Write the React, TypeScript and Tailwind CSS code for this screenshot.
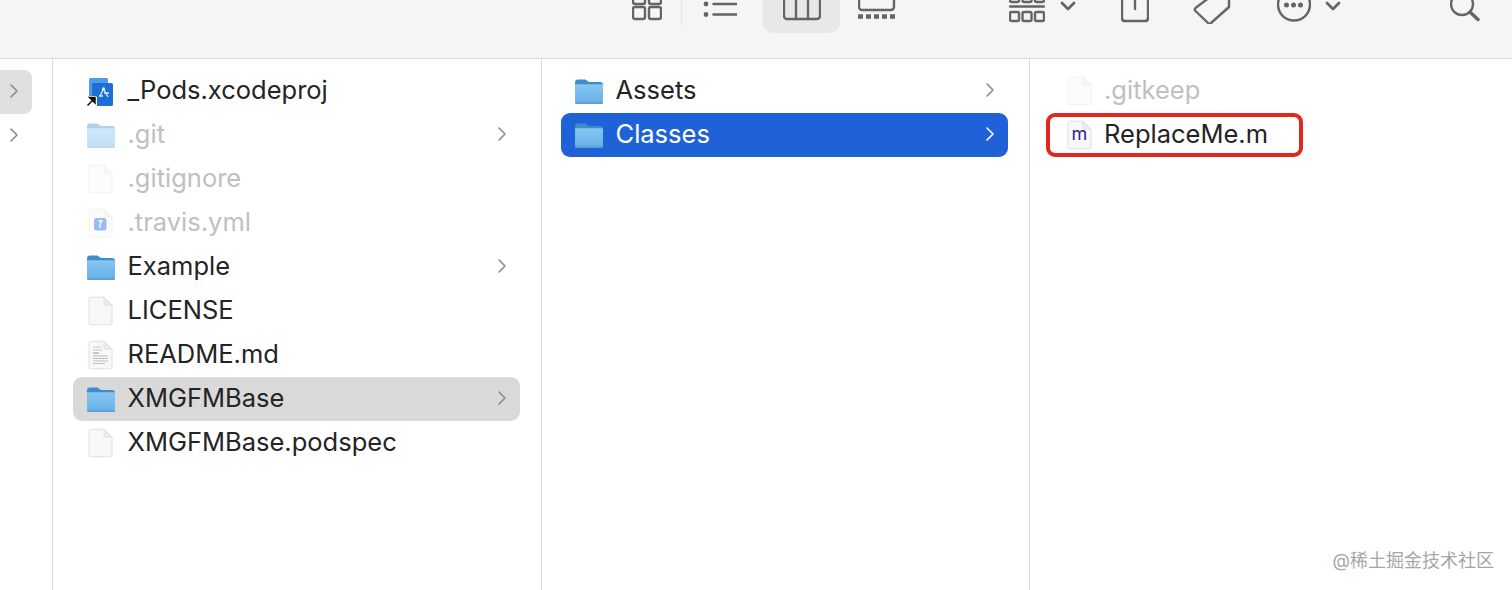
const font = { fontFamily: "Inter, 'Noto Sans CJK SC', sans-serif" };

function FolderIcon({ faded = false }: { faded?: boolean }) {
  return (
    <svg width="30" height="28" viewBox="0 0 30 28" className={faded ? "opacity-40" : ""}>
      <defs>
        <linearGradient id="folder-body" x1="0" y1="0" x2="0" y2="1">
          <stop offset="0" stopColor="#86c6f1" />
          <stop offset="1" stopColor="#66afe6" />
        </linearGradient>
      </defs>
      <path d="M1 5.500C1 3.500 2 2.500 4 2.500h6.500c1.500 0 2 .6 3 1.600.7.700 1.200.900 2.200.900H26c2 0 3 1 3 3v3H1z" fill="#3f8ccb" />
      <path d="M1 8.500c0-.800.500-1.200 1.200-1.200h25.600c.700 0 1.200.400 1.200 1.200v15.500c0 1.700-1 2.600-2.600 2.600H3.600C2 26.600 1 25.700 1 24z" fill="url(#folder-body)" />
      <rect x="1" y="25.500" width="28" height="1.500" rx="0.700" fill="#5a9ccf" />
    </svg>
  );
}

function FileIcon({ faded = false, children }: { faded?: boolean; children?: React.ReactNode }) {
  return (
    <svg width="30" height="32" viewBox="0 0 30 32" className={faded ? "opacity-40" : ""}>
      <path d="M3 3.500c0-.800.500-1.300 1.300-1.300h13.700L26 10v18.500c0 .800-.500 1.300-1.300 1.300H4.300c-.800 0-1.300-.500-1.300-1.300z" fill="#f8f8f8" stroke="#e0e0e0" />
      <path d="M18 2.200V8.500c0 1 .500 1.500 1.500 1.500H26z" fill="#ececec" stroke="#e0e0e0" />
      {children}
    </svg>
  );
}

function XcodeIcon() {
  return (
    <svg width="30" height="32" viewBox="0 0 30 32">
      <rect x="3" y="3" width="19" height="25" rx="1.500" fill="#4f9be6" />
      <rect x="6" y="8" width="21" height="23" rx="1.500" fill="#1c6fd3" />
      <path d="M14 21l3.500-7 4.500 8M13 21h4M18 18h5" fill="none" stroke="#d8e9fb" strokeWidth="1.300" />
      <circle cx="17.500" cy="14" r="1.700" fill="#d8e9fb" />
      <rect x="0" y="21" width="11" height="11" rx="1.500" fill="#ffffff" />
      <path d="M1.500 30.500l6-6M3.500 22.500h5.500v5.500z" fill="#111111" stroke="#111111" strokeWidth="1.500" />
    </svg>
  );
}

function Chevron({ tone = "#8b8b8b" }: { tone?: string }) {
  return (
    <svg width="10" height="16" viewBox="0 0 10 16" className="-mt-[2px] shrink-0">
      <path d="M2 2l6 6-6 6" fill="none" stroke={tone} strokeWidth="1.600" strokeLinecap="round" strokeLinejoin="round" />
    </svg>
  );
}

type Row = {
  name: string;
  icon: React.ReactNode;
  faded?: boolean;
  arrow?: boolean;
  state?: "active" | "inactive";
};

const readme = (
  <FileIcon>
    <path d="M7 8h8M7 11h9" stroke="#c9c9c9" strokeWidth="1" />
    <path d="M7 14h6" stroke="#e08a92" strokeWidth="1.200" />
    <path d="M7 17h15M7 19.500h15M7 22h15M7 24.500h12" stroke="#bdbdbd" strokeWidth="1" />
  </FileIcon>
);

const travis = (
  <FileIcon faded>
    <rect x="8" y="11" width="12.500" height="12.500" rx="2.500" fill="#0058e0" />
    <path d="M13.500 21l1.500-7M12.500 14h4.500" stroke="#fff" strokeWidth="1.300" />
  </FileIcon>
);

const mFile = (
  <FileIcon>
    <text x="14.500" y="21" textAnchor="middle" fontSize="18" fontFamily="Inter, sans-serif" fill="#2a2391">m</text>
  </FileIcon>
);

const projectRows: Row[] = [
  { name: "_Pods.xcodeproj", icon: <XcodeIcon /> },
  { name: ".git", icon: <FolderIcon faded />, faded: true, arrow: true },
  { name: ".gitignore", icon: <FileIcon faded />, faded: true },
  { name: ".travis.yml", icon: travis, faded: true },
  { name: "Example", icon: <FolderIcon />, arrow: true },
  { name: "LICENSE", icon: <FileIcon /> },
  { name: "README.md", icon: readme },
  { name: "XMGFMBase", icon: <FolderIcon />, arrow: true, state: "inactive" },
  { name: "XMGFMBase.podspec", icon: <FileIcon /> },
];

const baseRows: Row[] = [
  { name: "Assets", icon: <FolderIcon />, arrow: true },
  { name: "Classes", icon: <FolderIcon />, arrow: true, state: "active" },
];

function FinderRow({ row }: { row: Row }) {
  const active = row.state === "active";
  return (
    <div
      className={`flex h-[44px] items-center rounded-[9px] pl-[13px] pr-[13px] ${
        active ? "bg-[#1f62d8]" : row.state === "inactive" ? "bg-[#d9d9d9]" : ""
      }`}
    >
      <div className="flex w-[41.5px] shrink-0 items-center">{row.icon}</div>
      <span
        className={`flex-1 pb-[2px] text-[25.5px] leading-[38px] ${
          active ? "text-white" : row.faded ? "text-[#c0c0c0]" : "text-[#242424]"
        }`}
      >
        {row.name}
      </span>
      {row.arrow && <Chevron tone={active ? "#ffffff" : "#8b8b8b"} />}
    </div>
  );
}

function ToolIcon({ w, ml, children }: { w: number; ml: number; children: React.ReactNode }) {
  // y in the viewBox is the page y, the tops of the icons are cut by the window
  return (
    <svg
      width={w}
      height="40"
      viewBox={`0 -16 ${w} 40`}
      className="shrink-0"
      style={{ marginLeft: ml }}
      fill="none"
      stroke="#666466"
      strokeWidth="2.400"
      strokeLinecap="round"
      strokeLinejoin="round"
    >
      {children}
    </svg>
  );
}

function Toolbar() {
  return (
    <div className="h-[59px] shrink-0 overflow-hidden border-b border-[#dcdadb] bg-[#f6f4f5]">
      <div className="-mt-4 flex h-[60px] items-start pl-[632px]">
        <ToolIcon w={30} ml={0}>
          <rect x="1" y="-8" width="12" height="12" rx="2" />
          <rect x="17" y="-8" width="12" height="12" rx="2" />
          <rect x="1" y="7" width="12" height="12" rx="2" />
          <rect x="17" y="7" width="12" height="12" rx="2" />
        </ToolIcon>
        <div className="ml-[19px] mt-[16px] h-[26px] w-px bg-[#e6e4e5]" />
        <ToolIcon w={34} ml={21}>
          <path d="M10.500 4h23M10.500 14.500h23" />
          <circle cx="3" cy="4" r="1.200" fill="#666466" />
          <circle cx="3" cy="14.500" r="1.200" fill="#666466" />
        </ToolIcon>
        <div className="ml-[26px] flex h-[49px] w-[77px] shrink-0 justify-center rounded-b-[10px] bg-[#e9e7e8]">
          <ToolIcon w={38} ml={0}>
            <rect x="1" y="-8" width="36" height="27" rx="3" />
            <path d="M13 -8v27M25 -8v27" />
          </ToolIcon>
        </div>
        <ToolIcon w={38} ml={18}>
          <rect x="1" y="-10" width="35" height="20" rx="3" />
          <path d="M0 16.500h5M8 16.500h5M16 16.500h5M24 16.500h5M32 16.500h5" strokeWidth="4.500" strokeLinecap="butt" />
        </ToolIcon>
        <ToolIcon w={36} ml={113}>
          <path d="M1 6.500h34" />
          <rect x="1" y="-6" width="9" height="8" rx="1.500" />
          <rect x="13.500" y="-6" width="9" height="8" rx="1.500" />
          <rect x="26" y="-6" width="9" height="8" rx="1.500" />
          <rect x="1" y="12" width="9" height="9" rx="1.500" />
          <rect x="13.500" y="12" width="9" height="9" rx="1.500" />
          <rect x="26" y="12" width="9" height="9" rx="1.500" />
        </ToolIcon>
        <ToolIcon w={16} ml={15}>
          <path d="M2 3l6 6 6-6" strokeWidth="2.800" />
        </ToolIcon>
        <ToolIcon w={28} ml={45}>
          <path d="M9 -4H4c-2 0-3 1-3 3v19c0 2 1 3 3 3h20c2 0 3-1 3-3V-1c0-2-1-3-3-3h-5M14 -8V9" />
        </ToolIcon>
        <ToolIcon w={38} ml={44}>
          <path d="M21 -6h12c2 0 3 1 3 3v10L18 23c-1 1-2 1-3 0L2.500 11c-1-1-1-2 0-3z" />
        </ToolIcon>
        <ToolIcon w={34} ml={46}>
          <circle cx="17" cy="4.500" r="16" />
          <circle cx="9.500" cy="5" r="1.300" fill="#666466" />
          <circle cx="16.500" cy="5" r="1.300" fill="#666466" />
          <circle cx="23.500" cy="5" r="1.300" fill="#666466" />
        </ToolIcon>
        <ToolIcon w={16} ml={14}>
          <path d="M2 3l6 6 6-6" strokeWidth="2.800" />
        </ToolIcon>
        <ToolIcon w={32} ml={109}>
          <circle cx="12" cy="4" r="11" />
          <path d="M20 12l8 7.500" strokeWidth="3.400" />
        </ToolIcon>
      </div>
    </div>
  );
}

function Sidebar() {
  return (
    <div className="flex w-[53px] shrink-0 flex-col border-r border-[#dcdcdc] pt-[11px]">
      <div className="flex h-[44px] w-[32px] items-center justify-center rounded-r-[8px] bg-[#e0e0e0] pr-[4px]">
        <Chevron />
      </div>
      <div className="flex h-[44px] w-[32px] items-center justify-center pr-[4px]">
        <Chevron />
      </div>
    </div>
  );
}

export default function App() {
  return (
    <div className="relative flex h-[590px] w-[1512px] flex-col overflow-hidden bg-white" style={font}>
      <Toolbar />
      <div className="flex flex-1">
        <Sidebar />
        <div className="flex w-[489px] shrink-0 flex-col border-r border-[#dcdcdc] pl-[20px] pr-[21px] pt-[10px]">
          {projectRows.map((row) => (
            <FinderRow key={row.name} row={row} />
          ))}
        </div>
        <div className="flex w-[488px] shrink-0 flex-col border-r border-[#dcdcdc] pl-[19px] pr-[21px] pt-[10px]">
          {baseRows.map((row) => (
            <FinderRow key={row.name} row={row} />
          ))}
        </div>
        <div className="flex flex-1 flex-col pl-[16px] pt-[10px]">
          <div className="flex h-[44px] w-[257px] items-center pl-[19px]">
            <div className="flex w-[39px] shrink-0 items-center">
              <FileIcon faded />
            </div>
            <span className="pb-[2px] text-[25.5px] leading-[38px] text-[#c0c0c0]">.gitkeep</span>
          </div>
          <div className="flex h-[44px] w-[257px] items-center rounded-[9px] border-4 border-[#e0281f] pl-[15px]">
            <div className="flex w-[39px] shrink-0 items-center">{mFile}</div>
            <span className="pb-[2px] text-[25.5px] leading-[34px] text-[#242424]">ReplaceMe.m</span>
          </div>
        </div>
      </div>
      <span className="absolute bottom-[17px] right-[18px] text-[18px] leading-[24px] text-[#a6a6a6]">@稀土掘金技术社区</span>
    </div>
  );
}
